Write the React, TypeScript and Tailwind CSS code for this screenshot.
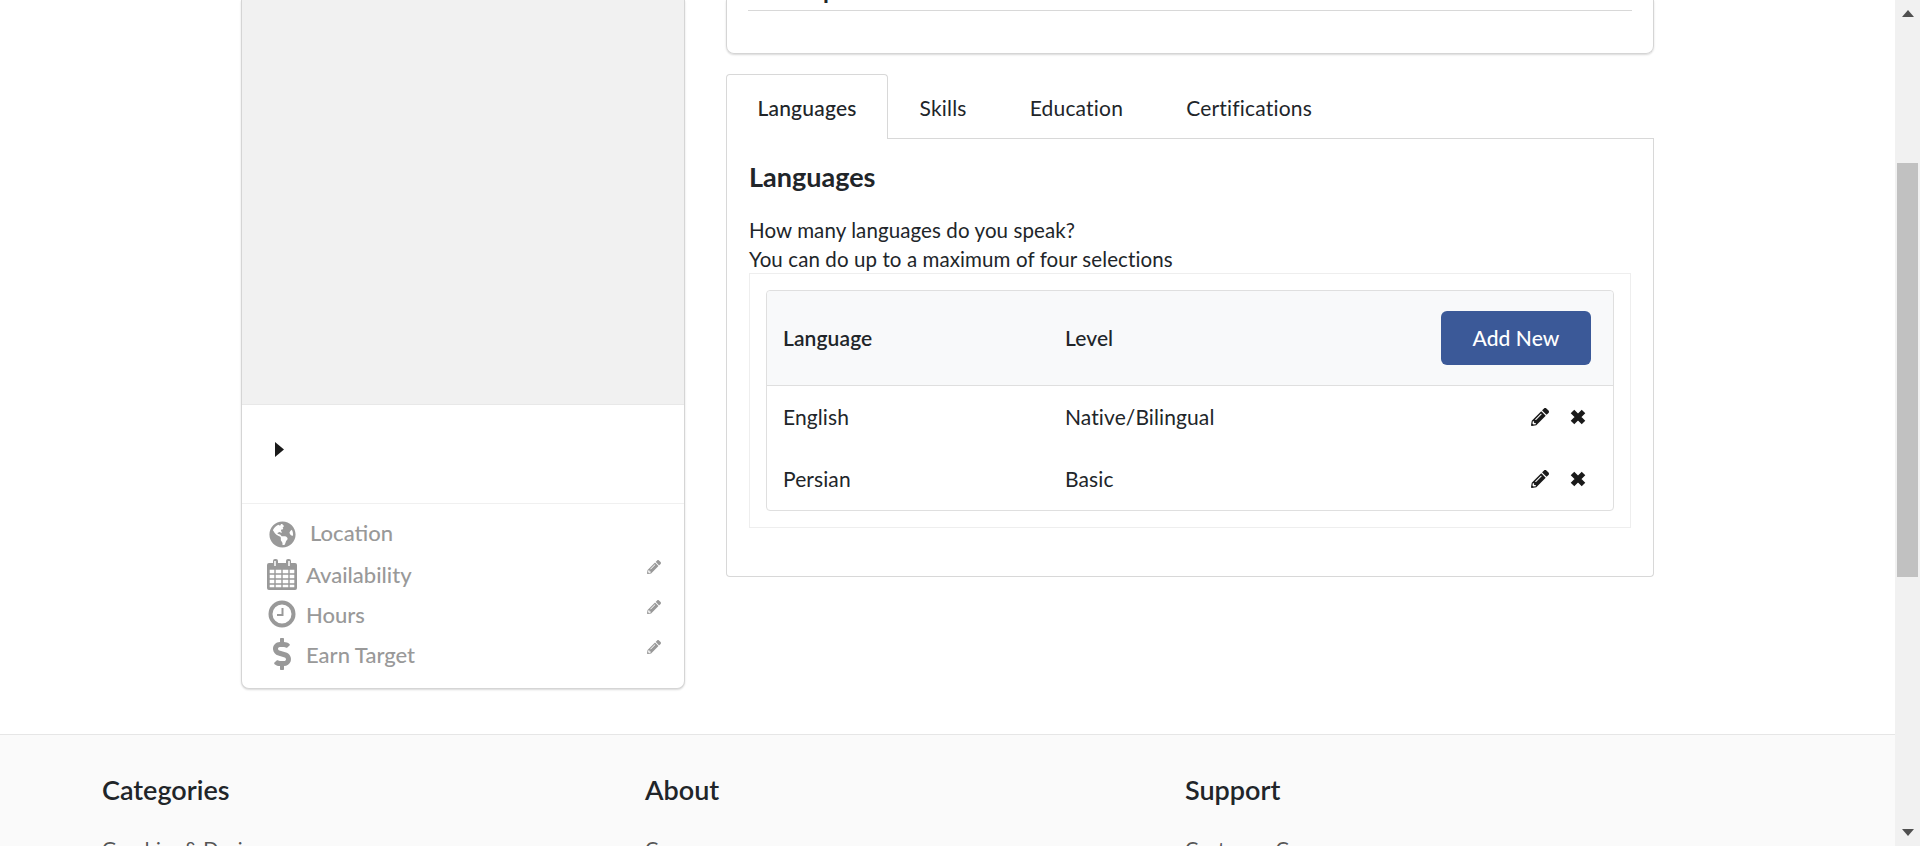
import { FaDollarSign, FaGlobeAmericas, FaPencilAlt } from 'react-icons/fa';

const CalendarIcon = () => (
  <svg viewBox="0 0 30 32" className="w-[30px] h-[32px]" fill="#999999">
    <path d="M2 5h4V3a2 2 0 0 1 2-2h1a2 2 0 0 1 2 2v2h8V3a2 2 0 0 1 2-2h1a2 2 0 0 1 2 2v2h4a2 2 0 0 1 2 2v23a2 2 0 0 1-2 2H2a2 2 0 0 1-2-2V7a2 2 0 0 1 2-2z" />
    <path d="M8 3v5M22 3v5" stroke="#ffffff" strokeWidth="1.5" />
    <path d="M2 11h26v19H2z" fill="#ffffff" />
    <path d="M2 11h26v19H2zM2 16h26M2 21h26M2 26h26M8 11v19M15 11v19M22 11v19" fill="none" stroke="#999999" strokeWidth="1.4" />
  </svg>
);

const ClockIcon = () => (
  <svg viewBox="0 0 28 28" className="w-[28px] h-[28px]" fill="none" stroke="#999999">
    <circle cx="14" cy="14" r="11.5" strokeWidth="4" />
    <path d="M14.5 8v7H9" strokeWidth="2" />
  </svg>
);

const CrossIcon = () => (
  <svg viewBox="0 0 16 16" className="ml-[21px] w-[16px] h-[16px]" fill="none" stroke="#1a1a1a" strokeWidth="5">
    <path d="M2.5 2.5l11 11M13.5 2.5l-11 11" />
  </svg>
);

const sidebarRows = [
  { label: 'Location', icon: <FaGlobeAmericas className="w-[27px] h-[27px]" />, text: 'ml-[13px] -mt-[3px]', edit: false },
  { label: 'Availability', icon: <CalendarIcon />, text: 'ml-[9px]', edit: true },
  { label: 'Hours', icon: <ClockIcon />, text: 'ml-[9px]', edit: true },
  { label: 'Earn Target', icon: <FaDollarSign className="w-[30px] h-[32px]" />, text: 'ml-[9px]', edit: true },
];

const languages = [
  { name: 'English', level: 'Native/Bilingual' },
  { name: 'Persian', level: 'Basic' },
];

const tabs = ['Skills', 'Education', 'Certifications'];

const Sidebar = () => (
  <aside className="w-[444px] h-[689px] shrink-0 bg-white border-x border-b border-[#d5d5d5] rounded-b-lg shadow-[0_1px_2px_rgba(0,0,0,0.15)]">
    <div className="h-[405px] bg-[#f1f1f1] border-b border-[#e8e8e8]" />
    <div className="h-[99px] border-b border-[#f0f0f0] flex items-center pl-[33px]">
      <svg viewBox="0 0 9 15" className="w-[9px] h-[15px] -mt-[9px]" fill="#1a1a1a">
        <polygon points="0,0 9,7.5 0,15" />
      </svg>
    </div>
    <div className="pt-[10px] pl-[25px] pr-[23px]">
      {sidebarRows.map((row) => (
        <div key={row.label} className="h-[40px] flex items-center text-[#999999] text-[22px] font-medium">
          <span className="w-[30px] flex justify-center shrink-0">{row.icon}</span>
          <span className={row.text}>{row.label}</span>
          {row.edit && <FaPencilAlt className="ml-auto w-[14px] h-[14px] -mt-[14px]" />}
        </div>
      ))}
    </div>
  </aside>
);

const LanguagesPanel = () => (
  <div className="border-x border-b border-[#d8d8d8] rounded-b pt-[20px] px-[22px] pb-[48px]">
    <h3 className="text-[27px] leading-[36px] font-bold text-[#212529]">Languages</h3>
    <p className="mt-[21px] text-[20.5px] leading-[29px] text-[#212529] tracking-[0.1px]">
      How many languages do you speak?
      <br />
      You can do up to a maximum of four selections
    </p>
    <div className="mt-[-1px] border border-[#eeeeee] p-[16px]">
      <div className="border border-[#dfdfdf] rounded text-[21px] tracking-[0.1px] text-[#212529]">
        <div className="h-[95px] bg-[#f8f9fa] border-b border-[#dfdfdf] flex items-center pl-[16px] pr-[22px] rounded-t">
          <span className="w-[282px] font-semibold">Language</span>
          <span className="font-medium">Level</span>
          <button className="ml-auto w-[150px] h-[54px] bg-[#3b5998] text-white rounded-md font-medium">Add New</button>
        </div>
        {languages.map((lang) => (
          <div key={lang.name} className="h-[62px] flex items-center pl-[16px] pr-[27px]">
            <span className="w-[282px]">{lang.name}</span>
            <span>{lang.level}</span>
            <FaPencilAlt className="ml-auto w-[18px] h-[18px] text-[#1a1a1a]" />
            <CrossIcon />
          </div>
        ))}
      </div>
    </div>
  </div>
);

const Profile = () => (
  <div className="w-[928px] shrink-0">
    <div className="h-[54px] border-x border-b border-[#d5d5d5] rounded-b-lg shadow-[0_1px_2px_rgba(0,0,0,0.15)] px-[21px] overflow-hidden">
      <div className="h-[11px] border-b border-[#d8d8d8] flex items-end overflow-hidden">
        <span className="pl-[7px] text-[24px] leading-[40px] text-[#212529] font-bold whitespace-nowrap">Description</span>
      </div>
    </div>
    <div className="mt-[20px] flex h-[65px] border-b border-[#d8d8d8] text-[21px] tracking-[0.2px] text-[#212529]">
      <div className="h-[65px] w-[162px] flex items-center justify-center bg-white border-x border-t border-[#d8d8d8] rounded-t font-medium pt-[2px]">
        Languages
      </div>
      {tabs.map((tab) => (
        <div key={tab} className="flex items-center px-[31.5px] pt-[3px]">
          {tab}
        </div>
      ))}
    </div>
    <LanguagesPanel />
  </div>
);

const Footer = () => (
  <footer className="flex-1 bg-[#fafafa] border-t border-[#e6e6e6] pl-[102px] pt-[38px]">
    <div className="flex text-[#212529]">
      <div className="w-[543px]">
        <h4 className="text-[27px] leading-[34px] font-semibold">Categories</h4>
        <p className="mt-[27px] text-[20px] leading-[28px] text-[#555555]">Graphics &amp; Design</p>
      </div>
      <div className="w-[540px]">
        <h4 className="text-[27px] leading-[34px] font-semibold">About</h4>
        <p className="mt-[27px] text-[20px] leading-[28px] text-[#555555]">Careers</p>
      </div>
      <div>
        <h4 className="text-[27px] leading-[34px] font-semibold">Support</h4>
        <p className="mt-[27px] text-[20px] leading-[28px] text-[#555555]">Customer Care</p>
      </div>
    </div>
  </footer>
);

const Scrollbar = () => (
  <div className="w-[25px] shrink-0 bg-[#f1f1f1] flex flex-col items-center">
    <svg viewBox="0 0 12 7" className="w-[12px] h-[7px] mt-[10px]" fill="#505050">
      <polygon points="6,0 12,7 0,7" />
    </svg>
    <div className="w-[21px] h-[414px] mt-[146px] bg-[#c1c1c1]" />
    <svg viewBox="0 0 12 7" className="w-[12px] h-[7px] mt-[252px]" fill="#505050">
      <polygon points="0,0 12,0 6,7" />
    </svg>
  </div>
);

export default function App() {
  return (
    <div className="flex h-[846px] overflow-hidden bg-white font-['Lato',sans-serif]">
      <div className="flex-1 flex flex-col min-w-0 overflow-hidden">
        <main className="h-[734px] shrink-0 flex gap-[41px] pl-[241px]">
          <Sidebar />
          <Profile />
        </main>
        <Footer />
      </div>
      <Scrollbar />
    </div>
  );
}
